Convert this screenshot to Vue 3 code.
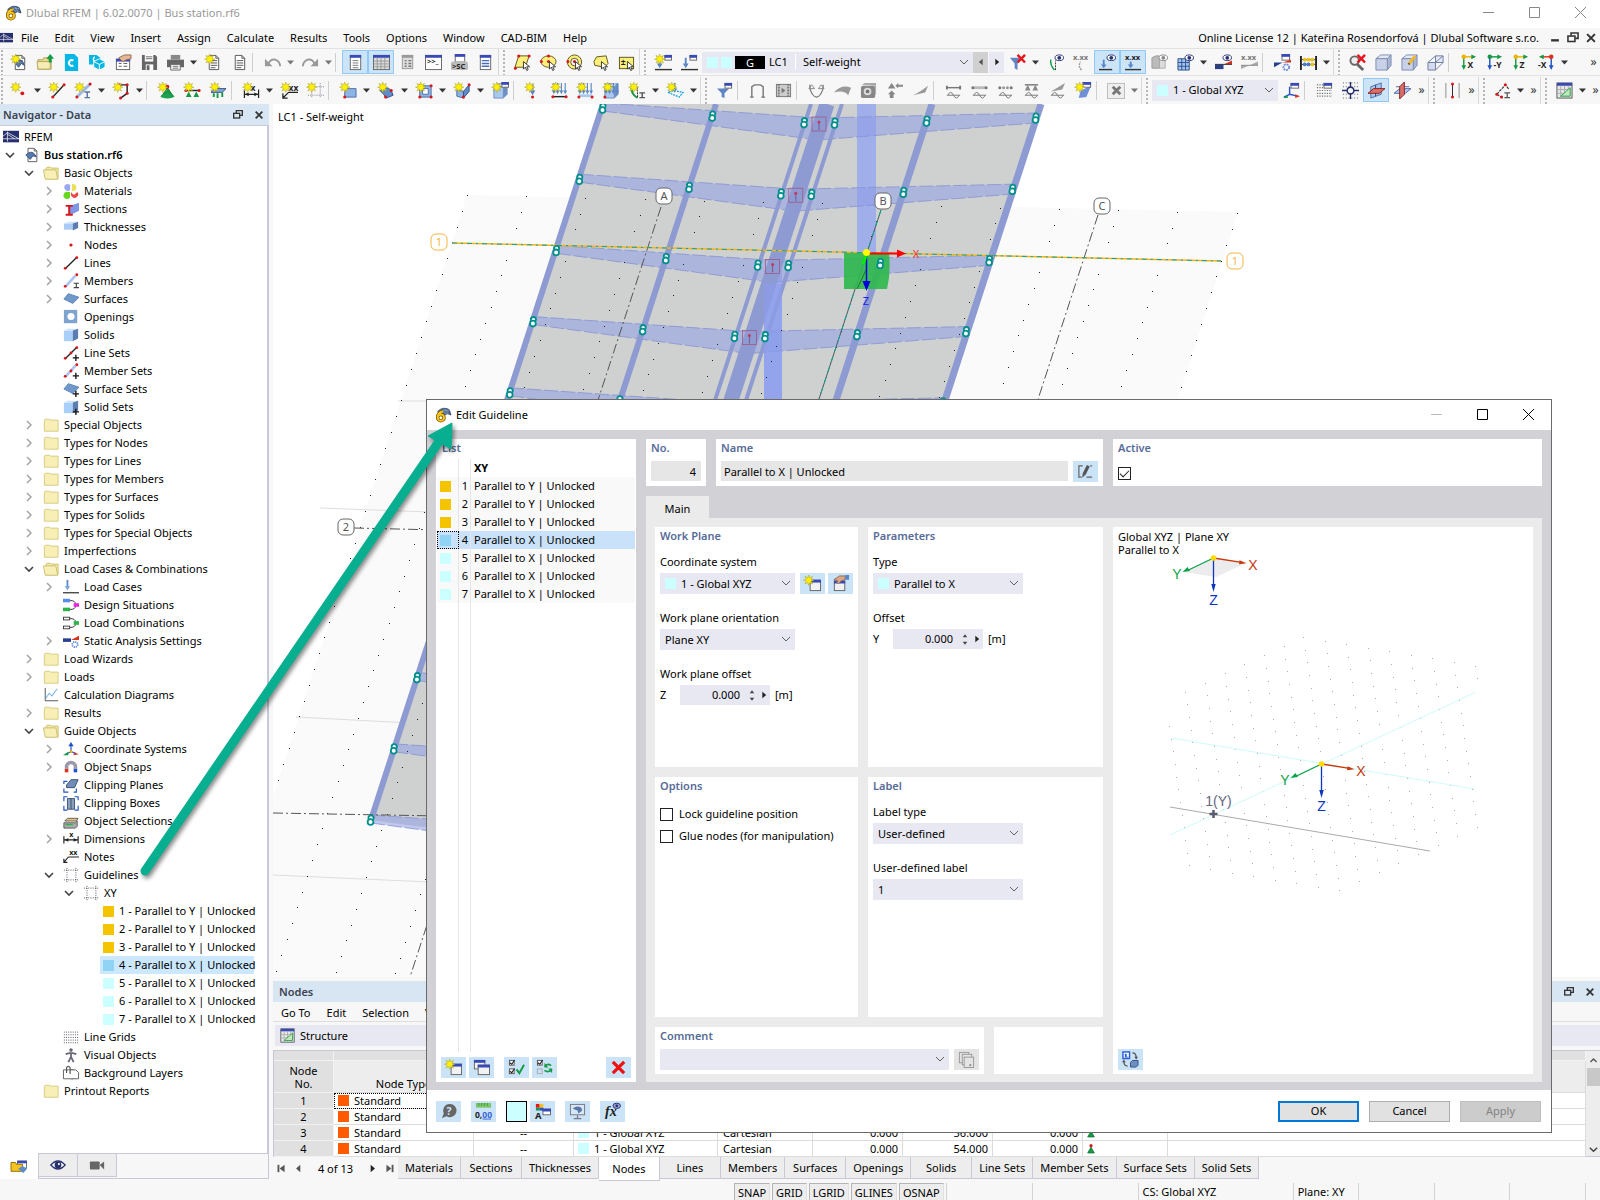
<script setup>
import { ref } from 'vue'

/* ---------- small drawing helpers for the 18 x 18 icons ---------- */
const star = '<path d="M5 0l1 3 3-1.500-1.500 3 3 1-3 1 1.500 3-3-1.500-1 3-1-3-3 1.500 1.500-3-3-1 3-1-1.500-3 3 1.500z" fill="#fff200" stroke="#a8982a" stroke-width=".5"/>'
const line = (d, c = '#222', w = 1.5, x = '') => `<path d="${d}" fill="none" stroke="${c}" stroke-width="${w}" ${x}/>`
const fill = (d, c, s = 'none') => `<path d="${d}" fill="${c}" stroke="${s}"/>`
const dot = (x, y, c = '#d8151b', r = 1.6) => `<circle cx="${x}" cy="${y}" r="${r}" fill="${c}"/>`
const win = (x, y, w, h, b = '#fff') => `<rect x="${x}.5" y="${y}.5" width="${w}" height="${h}" fill="${b}" stroke="#666"/><rect x="${x}" y="${y}" width="${w + 1}" height="3" fill="#3a49b8"/>`
const doc = (c = '#555') => `<path d="M4.500 1.500h7l3 3v12h-10z" fill="#fff" stroke="${c}"/><path d="M11.500 1.500v3h3" fill="none" stroke="${c}"/>`
const lines = (c = '#555') => line('M6 7h7M6 9.500h7M6 12h7M6 14.500h5', c, 1)
const txt = (s, x, y, z = 7, c = '#222') => `<text x="${x}" y="${y}" font-size="${z}" font-weight="700" fill="${c}">${s}</text>`
const cube = (a = '#a9c9f2', b = '#cfe2fa', c = '#6f8fc0') => fill('M2 5l4-3h10l-4 3z', b, c) + fill('M12 5l4-3v11l-4 4z', c, c) + fill('M2 5h10v12H2z', a, c)
const eye = '<ellipse cx="13" cy="4" rx="4.500" ry="3" fill="#fff" stroke="#27306e"/><circle cx="13" cy="4" r="2" fill="#27306e"/>'
const wave = (c = '#777') => line('M2 14h14M3 14q3-6 6 0t6 0', c, 1)
const cursor = fill('M10 8v8l2-2 1.500 3.500 1.500-1-1.500-3h3z', '#fff', '#333')
const axes = (l, c1, c2, flip) => line(flip ? 'M14 3H5' : 'M4 3h9', c2, 1.5) + fill(flip ? 'M1 3l5-2.500v5z' : 'M17 3l-5-2.500v5z', '#149a45') + line(flip ? 'M14 3v10' : 'M4 3v10', c1, 1.5) + fill(flip ? 'M14 17l-2.500-5h5z' : 'M4 17l-2.500-5h5z', c1) + dot(flip ? 14 : 4, 3, c2, 2.4) + txt(l, flip ? 0 : 8, 15, 9)
const bolt = line('M3 1v9M7 1v9M11 1v9M15 1v9', '#5a86c8', 1.2) + fill('M1 9h4l-2 4zM5 9h4l-2 4zM9 9h4l-2 4zM13 9h4l-2 4z', '#5a86c8')

const icons = {
  app: fill('M3 5q6-6 13-2l2 6q-4-3-7 0l-3 1z', '#4c6a92', '#33486a') + line('M7 3l6 5M11 2l4 6M5 6q5-4 11-2', '#9eb4d2', .7) + '<path d="M9 5Q3 6 3 12a3.600 3.600 0 1 0 7.200 0a3.600 3.600 0 1 0-7.200 0" fill="none" stroke="#7a5900" stroke-width="3.800"/><path d="M9 5Q3 6 3 12a3.600 3.600 0 1 0 7.200 0a3.600 3.600 0 1 0-7.200 0" fill="none" stroke="#f5c320" stroke-width="2.200"/>',
  bridge: '<rect x="0" y="2" width="18" height="13" fill="#27306e"/>' + line('M0 11h18M5 3v11M5 4l13 7M5 4L0 8M5 6l8 5', '#fff', .8),
  newfile: doc() + fill('M4 9q3-4 8-2l2 5-3-2-3 4z', '#5878a8', '#3a5582') + star,
  open: fill('M1 6h5l1-2h5v2h3v10H1z', '#e8dc92', '#b3a55a') + fill('M0 8h14v8H1z', '#f5edb4', '#b3a55a') + fill('M14 0l4 5h-2.500v4h-3V5H10z', '#149a45'),
  cloudc: fill('M2 0h10l4 4v14H2z', '#06b7e6') + line('M11 7a3 3 0 1 0 0 5', '#fff', 2.2),
  cubes: fill('M0 1h8l4 3v7H0z', '#06b7e6') + fill('M11 5l6 3v6l-6 3-6-3V8z', '#06b7e6', '#fff') + line('M5 8l6 3 6-3M11 11v6', '#fff', 1) + line('M6 3a3 3 0 0 0 0 5', '#fff', 1.5),
  props: win(1, 5, 14, 11) + line('M4 10h3M9 10h4M4 13h3M9 13h4', '#555', 1) + fill('M4 4l6-3h7v4l-5 1-3 2-2-1z', '#e5b795', '#946b4f'),
  save: fill('M1 1h14l2 2v14H1z', '#666') + fill('M4 1h9v7H4z', '#fff') + line('M5 3h7M5 5h7', '#666', 1) + fill('M5 11h8v6H5z', '#fff') + fill('M6 12h3v5H6z', '#666'),
  print: fill('M0 6h18v8H0z', '#666') + fill('M4 1h10v5H4z', '#888') + fill('M4 11h10v6H4z', '#fff', '#666') + line('M6 13h6M6 15h6', '#666', 1),
  newrep: doc() + lines() + star,
  report: doc() + lines(),
  undo: line('M5 10Q7 5 12 6q5 2 5 7', '#999', 2) + fill('M1 5v8h8z', '#999'),
  redo: line('M13 10Q11 5 6 6q-5 2-5 7', '#999', 2) + fill('M17 5v8H9z', '#999'),
  panel: '<rect x="3.500" y="1.500" width="11" height="15" fill="#fff" stroke="#666"/><rect x="3" y="1" width="12" height="3" fill="#3a49b8"/>' + line('M6 7h6M6 9.500h6M6 12h6M6 14.500h6', '#777', 1),
  table: '<rect x=".5" y="1.500" width="17" height="15" fill="#ddd" stroke="#666"/><rect x="0" y="1" width="18" height="3" fill="#3a49b8"/>' + line('M1 7.500h16M1 10.500h16M1 13.500h16M4.500 4v12M8.500 4v12M12.500 4v12', '#999', 1),
  panelg: '<rect x="3.500" y="1.500" width="11" height="14" fill="#ddd" stroke="#999"/><rect x="3" y="1" width="12" height="3" fill="#999"/>' + line('M6 7h2M10 7h3M6 10h2M10 10h3M6 13h2M10 13h3', '#777', 1.5),
  console: win(0, 1, 17, 15) + txt('&gt;&gt;_', 2, 11, 8),
  script: win(4, 0, 10, 8) + '<rect x="0" y="8" width="18" height="9" rx="2" fill="#bbb"/>' + txt('&gt;SC', 1, 15.500, 8),
  list: '<rect x="3.500" y="1.500" width="11" height="15" fill="#fff" stroke="#666"/><rect x="3" y="1" width="12" height="3" fill="#3a49b8"/>' + line('M5 7h8M5 10h8M5 13h8', '#4a6cc0', 1.5),
  selrect: fill('M5 2h11l-4 12H1z', '#fdf07a', '#5b5320') + dot(5, 2) + dot(16, 2) + dot(1.500, 15) + cursor,
  selell: '<ellipse cx="9" cy="8" rx="8" ry="6" fill="#fdf07a" stroke="#5b5320"/>' + dot(9, 8) + dot(9, 2) + dot(1.500, 8) + cursor,
  selring: '<circle cx="9" cy="8.500" r="7.500" fill="#fdf07a" stroke="#5b5320"/><circle cx="9" cy="8.500" r="4" fill="#f7f7f7" stroke="#5b5320"/>' + dot(9, 8) + dot(2, 8) + cursor,
  sellasso: fill('M2 8L5 3l10-1 2 8-4 4-10-2z', '#fdf07a', '#5b5320') + cursor,
  selpm: '<rect x="1.500" y="3.500" width="15" height="12" fill="#fdf07a" stroke="#5b5320"/>' + txt('±', 3, 12, 9) + cursor,
  lcnew: win(10, 1, 7, 5) + line('M5 4v8', '#5a86c8', 2) + fill('M2 10h6l-3 5z', '#5a86c8') + line('M0 16.500h18', '#333', 1.5) + star,
  lc: win(9, 1, 7, 5) + line('M5 4v8', '#5a86c8', 2) + fill('M2 10h6l-3 5z', '#5a86c8') + line('M0 16.500h18', '#333', 1.5),
  filterx: fill('M1 4h13l-5 6v7l-3-2v-5z', '#5e86c6') + line('M9 1l8 8M17 1l-8 8', '#e8141c', 2.6),
  eyearc: eye + line('M8 17Q3 12 4 6', '#149a45', 1.5) + line('M9 17V7', '#333', 1, 'stroke-dasharray="2 1"'),
  xarc: txt('x.xx', 0, 6, 8, '#777') + line('M9 17Q5 13 8 8', '#999', 1.5, 'stroke-dasharray="2 1"'),
  eyeload: eye + line('M5 6v6', '#5a86c8', 2) + fill('M2 11h6l-3 4z', '#5a86c8') + line('M0 16.500h14', '#333', 1.5),
  xload: txt('x.xx', 0, 6, 8) + line('M6 8v4', '#5a86c8', 2) + fill('M3 11h6l-3 4z', '#5a86c8') + line('M0 16.500h17', '#333', 1.5),
  eyebox: fill('M1 4l4-2h4v13H1z', '#bbb', '#999') + fill('M9 4h6v11H9z', '#ddd', '#aaa') + '<ellipse cx="13" cy="4" rx="4.500" ry="3" fill="#fff" stroke="#888"/><circle cx="13" cy="4" r="2" fill="#888"/>',
  eyegrid: fill('M1 5h12v12H1z', '#9fc2ef', '#33508a') + line('M5 5v12M9 5v12M1 9h12M1 13h12', '#33508a', 1) + eye,
  eyewave: fill('M0 11h9v5H0z', '#27408e') + fill('M9 11l9-4v4z', '#d8321e') + line('M0 11h18', '#333', 1) + eye,
  xwave: txt('x.xx', 0, 6, 8, '#777') + fill('M0 12h9l-9 4z', '#aaa') + fill('M9 12l9-4v4z', '#aaa') + line('M0 12h18', '#888', 1),
  setwave: win(8, 0, 8, 6) + fill('M0 9h9l-9 5z', '#27408e') + fill('M9 9l9-3v3z', '#d8321e') + '<circle cx="13" cy="14" r="3" fill="none" stroke="#6e8fd8" stroke-width="2" stroke-dasharray="2 .8"/>',
  abacus: line('M1 2v15M17 2v15', '#222', 2) + line('M1 6h16M1 11h16', '#333', 1) + dot(5, 6, '#e8c020', 2) + dot(9, 6, '#e8c020', 2) + dot(13, 6, '#e8c020', 2) + dot(5, 11, '#4c78c8', 2) + dot(9, 11, '#4c78c8', 2) + dot(13, 11, '#e8c020', 2),
  magx: '<circle cx="6" cy="7" r="4.500" fill="#eee" stroke="#666" stroke-width="2"/>' + line('M9 11l6 6', '#666', 3) + line('M9 1l8 8M17 1l-8 8', '#e8141c', 2.6),
  box: fill('M1 5l5-4h11l-4 4z', '#e2e8f5', '#7c8bb2') + fill('M13 5l4-4v11l-4 5z', '#a9b5d3', '#7c8bb2') + fill('M1 5h12v12H1z', '#c8d1e8', '#7c8bb2'),
  boxwire: fill('M1 9h8v8H1z', '#d4dbee', '#6b7aa0') + fill('M9 2h8v7H9z', '#e6eaf5', '#6b7aa0') + line('M1 9l8-7M9 9l8-7M9 17l8-8', '#6b7aa0', 1),
  ax1: axes('X', '#149a45', '#e8b400'), ax2: axes('-Y', '#2053c8', '#149a45'), ax3: axes('Z', '#149a45', '#e8b400'), ax4: axes('-X', '#2053c8', '#d8321e', 1),
  node: star + dot(12, 12, '#d8151b', 2), nline: line('M4 16L16 3') + dot(4, 16) + dot(16, 3) + star,
  member: line('M2 16L16 2', '#9db8e2', 3) + dot(2, 16) + dot(16, 2) + line('M10 10.500h6M10 16.500h6M13 10.500v6', '#5a73a8', 1.5) + star,
  poly: line('M7 3h8v9l-7 5', '#222', 1.5) + dot(7, 3) + dot(15, 3) + dot(15, 12) + dot(8, 17) + star,
  support: fill('M10 6l6 9H4z', '#149a45', '#0c6b2e') + '<ellipse cx="10" cy="15" rx="7" ry="2.500" fill="#1aa34f"/>' + dot(10, 5, '#d8151b', 2) + star,
  linesup: line('M1 9h16') + dot(2, 9) + dot(16, 9) + fill('M5 10l3 6H2zM13 10l3 6h-6z', '#149a45') + star,
  surfsup: fill('M5 7h12l-4 4H1z', '#7fa6d8', '#33508a') + line('M4 12v4M8 12v5M13 11v5', '#149a45', 2) + star,
  dim: line('M1.500 8v9M16.500 8v9M2 13h14', '#222', 1.3) + fill('M2 13l4-2v4zM16 13l-4-2v4z', '#222') + txt('x', 8, 10, 9) + star,
  note: line('M8 11h10M8 11l-6 6M2 12v5h5', '#222', 1.3) + txt('xx', 8, 9, 9) + star,
  guide: line('M5 1v16M14 1v16M1 5h17M1 14h17', '#889', 1, 'stroke-dasharray="1 1"') + star,
  surf: fill('M5 7h12v9H5z', '#8db4e8', '#4c6ca0') + dot(5, 16) + star, surf2: fill('M2 9q7-6 12 0l2 5-7 3-3-4z', '#5f8cc6', '#33508a') + dot(14, 9) + dot(8, 16) + star,
  opening: fill('M4 4h12v12H4z', '#8db4e8', '#4c6ca0') + fill('M7 7h6v6H7z', '#fff', '#4c6ca0') + dot(4, 4) + dot(16, 4) + dot(4, 16) + dot(16, 16) + star,
  surf3: fill('M3 8l7 2v7l-7-2z', '#8db4e8', '#4c6ca0') + fill('M10 10l6-7v7l-6 7z', '#5f8cc6', '#33508a') + dot(10, 16) + dot(16, 3) + star,
  solid: cube() + win(10, 0, 7, 5) + star,
  nload: line('M8 2v9', '#5a86c8', 2) + fill('M5 9h6l-3 5z', '#5a86c8') + dot(8, 16) + star,
  mload: bolt + line('M1 15.500h16', '#222', 1.5) + dot(2, 15.500) + dot(16, 15.500) + star, sload: bolt + fill('M2 13h14v3H2z', '#a9c9f2') + dot(2, 16) + dot(16, 16) + star,
  vload: cube() + bolt + dot(2, 16) + star, arc: line('M9 17Q1 12 3 4', '#149a45', 2) + line('M9 16V4', '#222', 1, 'stroke-dasharray="2 1"') + line('M11 11.500h6M11 16.500h6M14 11.500v5', '#555', 1.5) + star,
  fload: line('M8 1v7', '#5a86c8', 2) + fill('M5 7h6l-3 4z', '#5a86c8') + line('M1 11l12 5 4-5-10-2z', '#06a0e6', 1.3, 'stroke-dasharray="2 1"') + star,
  filter: fill('M1 7h13l-5 5v5l-3-1v-4z', '#5e86c6') + win(9, 1, 7, 5), portal: line('M3 16V5l3-2h6l3 2v11M1 16h4M13 16h4', '#777', 1.5), film: '<rect x="1.500" y="2.500" width="15" height="13" fill="#ccc" stroke="#777"/>' + line('M4 2v14M14 2v14', '#777', 2, 'stroke-dasharray="2 1"') + fill('M7 6l4 3-4 3z', '#777'),
  parab: line('M2 3v4q3 9 7 9t7-9V3', '#777', 1.3) + line('M1 7l3-4 3 4M11 7l3-4 3 4M1 7h6M11 7h6', '#888', 1), shell: fill('M0 11Q8 2 18 6l-3 8q-4-6-15-3z', '#999'), cast: '<rect x="1" y="4" width="15" height="13" rx="2" fill="#888"/><circle cx="8" cy="10" r="4" fill="#ddd"/><circle cx="8" cy="10" r="2" fill="#777"/>' + fill('M2 3l3-2h12v12l-1 1V4z', '#aaa'),
  react: fill('M6 1l4 6H2zM6 9l4 4H8v4H4v-4H2z', '#888') + fill('M10 4l3-3v2h5v2h-5v2z', '#888'), wedge: fill('M1 14Q8 11 17 4l-3 7z', '#999'),
  r1: line('M2 6h14', '#777', 1.5) + fill('M1 4h2v4H1zM15 4h2v4h-2z', '#777') + wave(), r2: line('M2 6h14', '#bbb', 3) + dot(2, 6, '#777') + dot(16, 6, '#777') + wave(), r3: dot(3, 6, '#777') + dot(7, 6, '#999') + dot(11, 6, '#999') + dot(15, 6, '#777') + wave(),
  r4: line('M2 3h14', '#777', 1.5) + fill('M5 3l3 6H2zM13 3l3 6h-6z', '#888') + wave(), r5: fill('M2 10Q9 6 17 1l-3 7z', '#999') + wave(),
  clipw: fill('M6 9l11-5-5 12-8 1z', '#6f8fd8') + win(8, 0, 8, 5) + star, xbox: '<rect x="-.500" y="1.500" width="18" height="16" fill="#eee" stroke="#bbb"/>' + line('M5 5l8 8M13 5l-8 8', '#777', 3),
  csys: win(8, 1, 8, 5) + line('M7 5v8l8 2M7 13l-6 3', '#2053c8', 1.5) + fill('M18 15l-5-2v4z', '#d8321e') + fill('M0 17l5-3v3z', '#149a45'), gridw: line('M1 3h9M1 6h8M1 9h16M1 12h16M1 15h16', '#777', 1.3, 'stroke-dasharray="1.300 1.300"') + win(8, 1, 8, 5),
  gridc: line('M1 1h16M1 5h16M1 13h16M1 17h16', '#555', 1, 'stroke-dasharray="1 2"') + line('M9 0v18M0 9h18', '#27306e', 1.5) + '<circle cx="9" cy="9" r="3.500" fill="#f7f7f7" stroke="#27306e" stroke-width="1.500"/>',
  plane1: fill('M3 5l11-4v12L3 17z', '#a9c9f2', '#4c6ca0') + line('M8 3v12', '#33508a', 1.2) + fill('M0 12l6-5h12l-6 5z', '#d9706a', '#8e1c1c'), plane2: fill('M0 12l6-5h12l-6 5z', '#a9c9f2', '#4c6ca0') + line('M2 5h14', '#4c6ca0', 1) + fill('M6 5l5-5v13l-5 5z', '#d9706a', '#8e1c1c'),
  rails: line('M2 1v16M16 1v16', '#888', 1) + line('M9 2v13', '#222', 1) + dot(9, 2) + dot(9, 16), angle: line('M3 13L12 3l4 5M3 13l6 4', '#333', 1.2, 'stroke-dasharray="3 1"') + dot(3, 13) + dot(12, 3) + dot(8, 16) + line('M11 11.500h6M11 16.500h6M14 11.500v5', '#555', 1.3),
  sheet: '<rect x="1" y="1" width="16" height="16" fill="#e8e8e8" stroke="#555"/><rect x="1" y="1" width="16" height="3" fill="#3a49b8"/>' + line('M1 8h16M1 12h16M5 4v13M9 4v13M13 4v13', '#aaa', 1) + fill('M15 6v9H5z', '#bfe8bf', '#2ba048'),

  /* navigator */
  file: doc() + fill('M2 9q5-5 9-2l3 4-4-1-3 4z', '#5878a8', '#3a5582'), dir: '<path d="M1.500 3.500l1-1h5l1 1h8.500v12.500H1.500z" fill="#f7efb6" stroke="#d5c87c"/>', diropen: '<path d="M3.500 15.500v-12l1-1h4l1 1h7.500v12z" fill="#f5eba8" stroke="#c9bb6b"/><path d="M.5 5.500h14l2 10.500H2.500z" fill="#f7efb6" stroke="#c9bb6b"/>',
  mat: '<path d="M5 1a4 4 0 1 0 3 7V2z" fill="#9aa8f0"/><path d="M11 1a4 4 0 0 1 0 8h-1V1z" fill="#ecdf5a"/><path d="M5 10a4 4 0 1 0 3 6V10z" fill="#63d81e"/><path d="M10 10q0 3 3 3l3-3a4 4 0 1 1-6 0z" fill="#e84848"/>',
  sect: fill('M6 6l12-4v9L8 16z', '#7f96e6') + line('M3 5.500h8M3 15.500h8M7 5.500v10', '#d8151b', 2.2), thick: fill('M1 5h10v7H1z', '#a9cbf5') + fill('M1 5l5-2h11l-6 2z', '#cfe2fa') + fill('M11 5l6-2v7l-6 3z', '#5c7eae'),
  tnode: dot(9, 9, '#d8151b', 1.8), tline: line('M3 15L15 3') + dot(2.500, 15) + dot(15.500, 3), tmem: line('M3 15L14 3', '#a9c4f0', 3) + dot(2.500, 15) + dot(15.500, 2) + line('M12 11.500h6M12 16.500h6M15 11.500v5', '#444', 1.3),
  tsurf: fill('M1 9l5-6 12 4-7 7z', '#6f98cc', '#5a80b0'), topen: '<rect x="1" y="1" width="15" height="15" fill="#7fa3cf"/><circle cx="9" cy="8.500" r="4" fill="#fff"/>', tsolid: fill('M1 4h10v12H1z', '#a9d0fb') + fill('M1 4l4-2h12l-6 2z', '#cfe2fa') + fill('M11 4l6-2v11l-6 3z', '#5c7eae'),
  plus: line('M14.500 11v7M11 14.500h7', '#111', 1.5), calc: line('M2.500 1v14.500H17', '#444', 1) + line('M3 13l4-6 3 3 6-8', '#7ab4ee', 1.2),
  tlc: line('M5 1v8', '#5a86c8', 2) + fill('M2 8h6l-3 5z', '#7fa6d8') + line('M0 15.500h18', '#222', 1.3), tds: fill('M0 2h8v4H0z', '#5a8cf0') + fill('M0 12h8v4H0z', '#2bb44a') + line('M8 4q6 0 6 4M8 14q6 0 6-4', '#222', 1) + fill('M12 7h6v4h-6z', '#f020e0'),
  tco: '<rect x=".5" y="2.500" width="7" height="3" fill="#fff" stroke="#333"/><rect x=".5" y="12.500" width="7" height="3" fill="#fff" stroke="#333"/>' + line('M8 4q6 0 6 4M8 14q6 0 6-4', '#222', 1) + fill('M12 7h6v4h-6z', '#2bb44a'), tsa: fill('M0 6h9v4H0z', '#27408e') + fill('M9 8l9-5v5z', '#d8321e') + '<circle cx="13.500" cy="13" r="3" fill="none" stroke="#6e8fd8" stroke-width="2" stroke-dasharray="1.500 .8"/>',
  tcs: line('M9 5v7l6 2M9 12l-6 3', '#2053c8', 1.3) + fill('M9 1l-3 5h6z', '#2053c8') + fill('M18 15l-6-2v3z', '#d8321e') + fill('M0 16l6-4v4z', '#149a45') + dot(9, 12, '#e8b400'), snap: line('M4 11V9a5 5 0 0 1 10 0v2', '#9a9aac', 4) + fill('M2 11h4v4H2z', '#d8321e') + fill('M12 11h4v4h-4z', '#2053c8'),
  clipp: fill('M4 9l5-6h8l-4 9H4z', '#6f8fb8', '#33486a') + line('M1 8V5h4M1 13v4h5M12 17h3v-4', '#2053c8', 1.3), clipb: fill('M5 4h8v12H5z', '#8aa0bc', '#33486a') + line('M9 4v12', '#33486a', 1) + line('M5 2H1v5M1 12v5h4M13 2h4v4M17 12v5h-4', '#2053c8', 1.3),
  objsel: fill('M2 9l3-3h12l-2 3z', '#e8c878', '#555') + fill('M1 11h13l2-2v6l-2 2H1z', '#aaa', '#555') + line('M3 13h8', '#2bb44a', 1.5), tdim: line('M1 6v8M17 6v8M1 10h16', '#222', 1.3) + fill('M2 10l4-2v4zM16 10l-4-2v4z', '#222') + txt('x', 7, 7, 8), tnote: line('M6 9h12M6 9l-5 6M1 11v4h4', '#222', 1.3) + txt('xx', 7, 7, 8),
  tguide: line('M4.500 1v16M14.500 1v16M1 3.500h17M1 14.500h17', '#334', 1, 'stroke-dasharray="1 1.500"'), tgrid: line('M1 3.500h16M1 6.500h16M1 9.500h16M1 12.500h16M1 15.500h16', '#334', 1, 'stroke-dasharray="1 1.500"'),
  man: dot(9, 3.500, '#667', 2) + line('M3 8l4-1h4l4 1M9 7v4l-3 6M9 11l3 6', '#667', 2), layers: '<path d="M.5 5.500h11v10H.5z" fill="#fff" stroke="#555"/><path d="M8.500 5.500h6l3 3v7h-9" fill="#fff" stroke="#555"/>' + line('M4 9V3q2-3 4 0v7', '#555', 1.3),
  navdata: win(7, 3, 10, 8) + fill('M0 5h5l1 2h7v8H0z', '#f5c320', '#8a6500') + fill('M8 12l5-3 5 3-4 5z', '#5f8cc6'), naveye: '<path d="M1 9q8-9 16 0-8 9-16 0z" fill="#fff" stroke="#27306e" stroke-width="1.500"/><circle cx="9" cy="9" r="3.800" fill="#27306e"/><circle cx="10" cy="8" r="1.200" fill="#fff"/>', cam: '<rect x="1" y="5" width="11" height="9" rx="1" fill="#666"/>' + fill('M12 9l5-4v9z', '#666'),

  /* dialog */
  dnew: win(6, 5, 11, 11, '#f2f2f2') + star, dcopy: win(1, 1, 11, 9, '#f2f2f2') + win(5, 6, 12, 10, '#f2f2f2'), hand: win(2, 6, 11, 10, '#f2f2f2') + fill('M2 5l6-4h6v4l-4 1-3 3-2-1 1-2z', '#d9a988', '#8f6a52') + fill('M14 0h4v5h-4z', '#5a86c8'),
  checks: '<rect x="1.500" y="1.500" width="5" height="5" fill="#fff" stroke="#555"/><rect x="1.500" y="10.500" width="5" height="5" fill="#fff" stroke="#555"/>' + line('M2 4l2 1.500L7 1M2 13l2 1.500L7 10', '#222', 1.2) + line('M9 11l3 4 5-9', '#149a45', 2), checkswap: '<rect x="1.500" y="1.500" width="5" height="5" fill="#fff" stroke="#555"/><rect x="1.500" y="10.500" width="5" height="5" fill="none" stroke="#aaa"/>' + line('M2 4l2 1.500L7 1', '#222', 1.2) + line('M9 8q3-4 7-1M17 11q-4 4-8 1', '#149a45', 1.8) + fill('M9 4v5h4zM17 15v-5h-4z', '#149a45'),
  del: line('M3 3l12 12M15 3L3 15', '#ee1111', 3.4), pen: line('M6 3H2v12h3M14 3h2M10 15h6', '#666', 1.3) + line('M7.500 12L12 3', '#555', 3.4) + fill('M6 11l3 1.500-3.500 3z', '#555'), multi: '<rect x="1.500" y="1.500" width="10" height="11" fill="#e4e4e4" stroke="#999"/><rect x="4.500" y="3.500" width="10" height="11" fill="#e4e4e4" stroke="#999"/><rect x="6.500" y="6.500" width="10" height="11" fill="#e4e4e4" stroke="#999"/>' + line('M12 15h2', '#888', 2),
  help: '<path d="M10 1a7 7 0 1 1-3 13l-5 2 2-5a7 7 0 0 1 6-10z" fill="#666"/>' + txt('?', 7, 12.500, 11, '#cce4f7'), units: '<rect x="1" y="0" width="16" height="5" fill="#7bc86c"/>' + line('M4 0v3M7 0v3M10 0v3M13 0v3', '#48933a', 1) + '<text x="0" y="15.500" font-size="9" font-weight="700" fill="#222">0,<tspan fill="#3a63d8">00</tspan></text>' + line('M8 17h9', '#3a63d8', 1),
  disp: fill('M2 1h4v4H2z', '#e8141c') + fill('M6 1h4v4H6z', '#f5c320') + fill('M2 5h4v3H2z', '#149a45') + fill('M6 5h4v3H6z', '#2053c8') + win(9, 6, 8, 6) + txt('A', 1, 17, 10), screen: '<rect x="1.500" y="1.500" width="15" height="11" fill="#d7e6f5" stroke="#778"/>' + fill('M4 6q4-4 9-1l1 3-4 3-1-3z', '#5878a8') + line('M9 13v3M5 16.500h8', '#778', 1.3),
  fx: '<text x="1" y="14" font-size="15" font-style="italic" font-weight="700" font-family="Liberation Serif, serif" fill="#222">fx</text>' + '<ellipse cx="13.500" cy="3" rx="4" ry="2.800" fill="#9ea4d8" stroke="#27306e"/><circle cx="13.500" cy="3" r="1.500" fill="#27306e"/>',
  swap: '<rect x="1" y="1" width="7" height="7" fill="#fff" stroke="#2a5bd8" stroke-width="1.500"/>' + fill('M3 3h2v3h2v1H3z', '#2a5bd8') + line('M11 2q4 0 4 5M6 16q-4 0-4-5', '#555', 1.3) + fill('M13 6h4l-2 3zM0 12h4l-2-3z', '#555') + fill('M9 12l2-2h6v5l-2 2H9z', '#6f8fc0', '#33508a'),
  restore: '<path d="M6.500 6V2.500h9v7H12" fill="none" stroke="#333" stroke-width="2"/><rect x="2.500" y="6.500" width="9" height="7" fill="none" stroke="#333" stroke-width="2"/>', close: line('M4 4l10 10M14 4L4 14', '#333', 2.6), minim: line('M4 12h10', '#333', 3),
  chev: line('M3 6l6 6 6-6', '#555', 1.4), open2: line('M3 6l6 6 6-6', '#444', 2.4), closed: line('M6 3l6 6-6 6', '#a4a4a4', 2.2),
  sup: fill('M9 6l5 9H4z', '#149a45', '#0c6b2e') + dot(9, 4, '#d8151b', 2.4), caret: fill('M2 5h14l-7 8z', '#333'), caretg: fill('M2 5h14l-7 8z', '#777'), left: fill('M12 3v12L5 9z', '#555'), right: fill('M6 3v12l7-6z', '#222'),
  first: line('M4 3v12', '#555', 3) + fill('M14 3v12L6 9z', '#555'), last: line('M14 3v12', '#555', 3) + fill('M4 3v12l8-6z', '#555'), up: line('M4 11.500l5-5 5 5', '#555', 2.2),
}
icons.boxpen = icons.box + line('M8 11l7-9', '#f0b92a', 3) + line('M8 11l1-1', '#444', 2)
icons.lineset = icons.tline + dot(9, 9) + icons.plus
icons.memset = line('M3 15L14 3', '#a9c4f0', 3) + dot(2.5, 15) + dot(9, 9) + dot(15.5, 2) + icons.plus
icons.surfset = icons.tsurf + icons.plus
icons.solset = icons.tsolid + icons.plus

/* toolbar rows: i = button, h = highlighted, d = drop arrow, s = separator, g = group edge */
const parse = s => s.trim().split(/\s+/).map(t => {
  const [k, v] = t.split(':')
  return { k, v }
})
const bar1 = parse(`e i:newfile i:open i:cloudc i:cubes i:props i:save i:print d i:newrep i:report s i:undo d:g i:redo d:g s
 h:panel h:table i:panelg i:console i:script i:list g i:selrect i:selell i:selring i:sellasso i:selpm g i:lcnew i:lc case
 i:filterx d i:eyearc i:xarc h:eyeload h:xload i:eyebox i:eyegrid d i:eyewave i:xwave s i:setwave i:abacus d g
 i:magx i:box i:boxpen i:boxwire s i:ax1 i:ax2 i:ax3 i:ax4 d sp more`)
const bar2 = parse(`e i:node d i:nline i:member d i:poly d s i:support i:linesup i:surfsup s i:dim d i:note i:guide s i:surf d i:surf2 d
 i:opening d i:surf3 d i:solid s i:nload i:mload i:sload i:vload i:arc d i:fload d g i:filter s i:portal i:film s
 i:parab i:shell i:cast i:react i:wedge s i:r1 i:r2 i:r3 i:r4 i:r5 i:clipw s i:xbox d:g g cs i:csys s
 i:gridw i:gridc h:plane1 i:plane2 more g i:rails more g i:angle d more g i:sheet d sp more`)

const menus = ['File', 'Edit', 'View', 'Insert', 'Assign', 'Calculate', 'Results', 'Tools', 'Options', 'Window', 'CAD-BIM', 'Help']

const tree = `0||bridge|RFEM
1|o|file|Bus station.rf6
2|o|diropen|Basic Objects
3|c|mat|Materials
3|c|sect|Sections
3|c|thick|Thicknesses
3|c|tnode|Nodes
3|c|tline|Lines
3|c|tmem|Members
3|c|tsurf|Surfaces
3||topen|Openings
3||tsolid|Solids
3||lineset|Line Sets
3||memset|Member Sets
3||surfset|Surface Sets
3||solset|Solid Sets
2|c|dir|Special Objects
2|c|dir|Types for Nodes
2|c|dir|Types for Lines
2|c|dir|Types for Members
2|c|dir|Types for Surfaces
2|c|dir|Types for Solids
2|c|dir|Types for Special Objects
2|c|dir|Imperfections
2|o|diropen|Load Cases & Combinations
3|c|tlc|Load Cases
3||tds|Design Situations
3||tco|Load Combinations
3|c|tsa|Static Analysis Settings
2|c|dir|Load Wizards
2|c|dir|Loads
2||calc|Calculation Diagrams
2|c|dir|Results
2|o|diropen|Guide Objects
3|c|tcs|Coordinate Systems
3|c|snap|Object Snaps
3||clipp|Clipping Planes
3||clipb|Clipping Boxes
3||objsel|Object Selections
3|c|tdim|Dimensions
3||tnote|Notes
3|o|tguide|Guidelines
4|o|tguide|XY
5||#f5c400|1 - Parallel to Y | Unlocked
5||#f5c400|2 - Parallel to Y | Unlocked
5||#f5c400|3 - Parallel to Y | Unlocked
5||#8fd3f5|4 - Parallel to X | Unlocked
5||#ccffff|5 - Parallel to X | Unlocked
5||#ccffff|6 - Parallel to X | Unlocked
5||#ccffff|7 - Parallel to X | Unlocked
3||tgrid|Line Grids
3||man|Visual Objects
3||layers|Background Layers
2||dir|Printout Reports`.split('\n').map(r => {
  const [lv, ex, icon, ...rest] = r.split('|')
  return { lv: +lv, ex, icon, text: rest.join('|') }
})

const guidelines = [1, 2, 3, 4, 5, 6, 7].map(n => ({
  n, color: n < 4 ? '#f5c400' : n === 4 ? '#8fd3f5' : '#ccffff', text: `Parallel to ${n < 4 ? 'Y' : 'X'} | Unlocked`,
}))

const rows = [[1, '60.000'], [2, '58.000'], [3, '56.000'], [4, '54.000']]
const sheets = ['Materials', 'Sections', 'Thicknesses', 'Nodes', 'Lines', 'Members', 'Surfaces', 'Openings', 'Solids', 'Line Sets', 'Member Sets', 'Surface Sets', 'Solid Sets']

/* model geometry */
const frames = Array.from({ length: 11 }, (_, k) => ({ x: 603 - 23.2 * k, y: 108 + 71.2 * k }))
const joints = [[0, 0], [109.7, 8], [201.500, 14.600], [232, 15], [324, 13], [433, 10]]
const purlins = [[603, 6], [716, 6], [811, 4], [827, 15], [842, 4], [932, 7], [1041, 7]]
let gridDots = ''
for (let j = 0; j < 50; j++) for (let i = 0; i < 14; i++) {
  const x = Math.round(467 + 59.2 * i - 5.1 * j)
  if (x > 273) gridDots += `M${x} ${Math.round(195 + 1.4 * i + 15.8 * j)}.5h1`
}
let previewDots = ''
for (let i = -10; i <= 10; i++) for (let j = -10; j <= 10; j++) {
  const x = 1321.3 + 21.47 * i - 19.67 * j
  if (x >= 1169 && x <= 1477) previewDots += `M${Math.round(x)} ${Math.round(763.7 + 3.57 * i + 9.1 * j)}.5h1`
}

const lock = ref(false)
const glue = ref(false)
const active = ref(true)
</script>

<template>
  <div class="app">
    <header class="titlebar">
      <svg class="ic" viewBox="0 0 18 18" v-html="icons.app" />
      <span class="grow">Dlubal RFEM | 6.02.0070 | Bus station.rf6</span>
      <div class="winbtns">
        <button aria-label="Minimize"><svg viewBox="0 0 11 11"><path d="M0 5.500h11" /></svg></button>
        <button aria-label="Maximize"><svg viewBox="0 0 11 11"><path d="M.5 .5h10v10h-10z" /></svg></button>
        <button aria-label="Close"><svg viewBox="0 0 11 11"><path d="M0 0l11 11M11 0L0 11" /></svg></button>
      </div>
    </header>

    <nav class="menubar">
      <svg class="ic brand" viewBox="0 0 18 18" v-html="icons.bridge" />
      <button v-for="m in menus" :key="m">{{ m }}</button>
      <span class="license">Online License 12 | Kateřina Rosendorfová | Dlubal Software s.r.o.</span>
      <button v-for="b in ['minim', 'restore', 'close']" :key="b" class="mdi" :aria-label="b"><svg viewBox="0 0 18 18" v-html="icons[b]" /></button>
    </nav>

    <div v-for="(bar, bi) in [bar1, bar2]" :key="bi" class="toolbar">
      <template v-for="(t, i) in bar" :key="i">
        <button v-if="t.k === 'i' || t.k === 'h'" class="tb" :class="{ on: t.k === 'h' }" :aria-label="t.v"><svg class="ic" viewBox="0 0 18 18" v-html="icons[t.v]" /></button>
        <button v-else-if="t.k === 'd'" class="drop" aria-label="More options"><svg viewBox="0 0 18 18" v-html="t.v ? icons.caretg : icons.caret" /></button>
        <i v-else-if="t.k === 's'" class="sep" />
        <i v-else-if="t.k === 'g'" class="edge" />
        <i v-else-if="t.k === 'e'" class="edge first" />
        <span v-else-if="t.k === 'sp'" class="grow" />
        <button v-else-if="t.k === 'more'" class="more" aria-label="Show more">»</button>
        <div v-else-if="t.k === 'cs'" class="combo cs">
          <i class="sw" />
          <select aria-label="Coordinate system"><option>1 - Global XYZ</option></select>
          <svg class="chev" viewBox="0 0 18 18" v-html="icons.chev" />
        </div>
        <template v-else>
          <div class="combo case">
            <i class="sw" /><i class="sw" /><b class="tag">G</b><span class="lc">LC1</span>
            <select aria-label="Load case"><option>Self-weight</option></select>
            <svg class="chev" viewBox="0 0 18 18" v-html="icons.chev" />
          </div>
          <button class="step dim" aria-label="Previous"><svg viewBox="0 0 18 18" v-html="icons.left" /></button>
          <button class="step" aria-label="Next"><svg viewBox="0 0 18 18" v-html="icons.right" /></button>
        </template>
      </template>
    </div>

    <div class="work">
      <aside class="navigator">
        <h2 class="panelhead"><span class="grow">Navigator - Data</span>
          <button v-for="b in ['restore', 'close']" :key="b" :aria-label="b"><svg viewBox="0 0 18 18" v-html="icons[b]" /></button>
        </h2>
        <ul class="tree">
          <li v-for="(r, i) in tree" :key="i" :class="['l' + r.lv, { bold: i === 1, sel: r.text.startsWith('4 -') }]">
            <span v-if="r.lv && r.lv < 5" class="exp"><svg v-if="r.ex" viewBox="0 0 18 18" v-html="r.ex === 'o' ? icons.open2 : icons.closed" /></span>
            <i v-if="r.lv === 5" class="sw" :style="{ background: r.icon }" />
            <svg v-else class="tic" viewBox="0 0 18 18" v-html="icons[r.icon]" />
            <span class="tx">{{ r.text }}</span>
          </li>
        </ul>
        <div class="navtabs">
          <button v-for="(b, i) in ['navdata', 'naveye', 'cam']" :key="b" :class="{ cur: i === 0 }" :aria-label="b"><svg class="ic" viewBox="0 0 18 18" v-html="icons[b]" /></button>
        </div>
      </aside>

      <main class="main">
        <section class="view">
          <svg viewBox="273 104 1327 873" preserveAspectRatio="xMinYMin slice">
            <path d="M467 195L1238 212L986 998H208z" fill="#fafafa" />
            <path d="M398 401h28M320 508L430 512M296 717L430 724M273 875L430 882" stroke="#dedede" fill="none" />
            <path d="M602 104H1041L800 838Q580 850 370 820z" fill="#cfd1d0" />
            <path d="M857 104h19v149h-19zM764 270h18v140h-18z" fill="#a0aeea" />
            <g v-for="f in frames" :key="f.y" :transform="`translate(${f.x} ${f.y})`">
              <path d="M0 -5L216 10L432 5V15L215 32L0 3z" fill="#8f9fe6" fill-opacity=".55" />
              <path d="M0 -5L216 10L432 5M0 3L215 32L432 15" fill="none" stroke="#8592d2" stroke-opacity=".8" stroke-dasharray="14 3" />
            </g>
            <path v-for="p in purlins" :key="p[0]" :d="`M${p[0]} 104l-232 716`" :stroke-width="p[1]" stroke="#8e9ad2" fill="none" />
            <path d="M764 284h18v116h-18z" fill="#8b9cec" fill-opacity=".6" />
            <path :d="gridDots" stroke="#222" />
            <g class="dashdot">
              <path d="M661 207L410 977M1098 215L850 977M354 528L440 530M273 813L440 816" />
            </g>
            <path d="M881 210L819 399" stroke="#555" /><path d="M881 210L819 399" stroke="#0aa39a" stroke-dasharray="6 5" />
            <path d="M452 243L1221 261" stroke="#f5b31e" stroke-width="1.500" /><path d="M452 243L1221 261" stroke="#0aa39a" stroke-dasharray="5 4 2 4" />
            <g v-for="f in frames" :key="f.x" :transform="`translate(${f.x} ${f.y})`" fill="none">
              <rect x="209" y="9" width="14" height="14" stroke="#a0507c" stroke-width=".7" />
              <circle cx="216" cy="14" r="1.500" fill="#c8385c" /><path d="M216 15v7" stroke="#7a3a70" stroke-opacity=".7" />
            </g>
            <path d="M844 253h45q2 20-2 36h-43z" fill="#2db84b" fill-opacity=".9" /><path d="M866 270l-9 19" stroke="#1b6f35" />
            <g v-for="f in frames" :key="f.y" :transform="`translate(${f.x} ${f.y})`" fill="#fff" stroke="#008f8a" stroke-width="1.800">
              <g v-for="j in joints" :key="j[0]" :transform="`translate(${j[0]} ${j[1]})`"><circle cx="0" cy="-2" r="2.600" /><circle cx="-.5" cy="2" r="2.900" /></g>
            </g>
            <path d="M867 253.500h32" stroke="#f00" stroke-width="2" /><path d="M906 253.500l-9-4v8z" fill="#f00" />
            <path d="M866.500 256v26" stroke="#00d" stroke-width="1.500" /><path d="M866.500 291l-4-10h8z" fill="#00d" />
            <path d="M866 256l-3 8" stroke="#0e0" stroke-width="3" /><circle cx="866.500" cy="252.500" r="3.500" fill="#ff0" />
            <g class="marks">
              <text x="916" y="258" fill="#e33">X</text><text x="866" y="305" fill="#22e">Z</text>
              <g v-for="m in [['A', 664, 196], ['B', 883, 201], ['C', 1102, 206], ['2', 346, 527]]" :key="m[0]">
                <rect :x="m[1] - 8" :y="m[2] - 8" width="16" height="16" rx="5" fill="#fff" stroke="#666" /><text :x="m[1]" :y="m[2] + 4" fill="#555">{{ m[0] }}</text>
              </g>
              <g v-for="m in [[439, 242], [1235, 261]]" :key="m[0]">
                <rect :x="m[0] - 8" :y="m[1] - 8" width="16" height="16" rx="5" fill="#fff" stroke="#f5b440" /><text :x="m[0]" :y="m[1] + 4" fill="#f5b440">1</text>
              </g>
            </g>
          </svg>
          <p class="caption">LC1 - Self-weight</p>
        </section>

        <section class="nodes">
          <h2 class="panelhead"><span class="grow">Nodes</span>
            <button v-for="b in ['restore', 'close']" :key="b" :aria-label="b"><svg viewBox="0 0 18 18" v-html="icons[b]" /></button>
          </h2>
          <div class="submenu"><button>Go To</button><button>Edit</button><button>Selection</button><button>View</button></div>
          <div class="combo structure"><svg class="ic" viewBox="0 0 18 18" v-html="icons.sheet" /><select aria-label="Table group"><option>Structure</option></select></div>
          <div class="tablewrap">
            <table>
              <colgroup><col style="width:60px"><col style="width:140px"><col style="width:100px"><col style="width:144px"><col style="width:95px"><col style="width:90px"><col style="width:90px"><col style="width:90px"><col style="width:85px"><col></colgroup>
              <thead>
                <tr class="thin"><th v-for="n in 10" :key="n" /></tr>
                <tr class="heads"><th class="no">Node<br>No.</th><th>Node Type</th><th v-for="n in 8" :key="n" /></tr>
              </thead>
              <tbody>
                <tr v-for="r in rows" :key="r[0]">
                  <th class="no">{{ r[0] }}</th>
                  <td :class="{ focus: r[0] === 1 }"><span class="cell"><i class="sw std" />Standard</span></td>
                  <td class="mid">--</td>
                  <td><span class="cell"><i class="sw" />1 - Global XYZ</span></td>
                  <td class="pad">Cartesian</td>
                  <td class="num">0.000</td><td class="num">{{ r[1] }}</td><td class="num">0.000</td>
                  <td><svg class="supic" viewBox="0 0 18 18" v-html="icons.sup" /></td><td />
                </tr>
              </tbody>
            </table>
            <div class="scroll"><svg viewBox="0 0 18 18" v-html="icons.up" /><i /><svg viewBox="0 0 18 18" v-html="icons.open2" /></div>
          </div>
          <div class="sheets">
            <div class="pager">
              <button aria-label="First"><svg viewBox="0 0 18 18" v-html="icons.first" /></button>
              <button aria-label="Previous"><svg viewBox="0 0 18 18" v-html="icons.left" /></button>
              <span class="grow">4 of 13</span>
              <button aria-label="Next"><svg viewBox="0 0 18 18" v-html="icons.right" /></button>
              <button aria-label="Last"><svg viewBox="0 0 18 18" v-html="icons.last" /></button>
            </div>
            <button v-for="s in sheets" :key="s" class="sheet" :class="{ cur: s === 'Nodes' }">{{ s }}</button>
          </div>
        </section>
      </main>
    </div>

    <footer class="status">
      <button v-for="s in ['SNAP', 'GRID', 'LGRID', 'GLINES', 'OSNAP']" :key="s">{{ s }}</button>
      <span class="c1" /><span class="c2" /><span class="c3">CS: Global XYZ</span><span class="c4">Plane: XY</span><span class="c5" /><span class="c5" /><span class="c5" /><span class="c6" />
    </footer>

    <section class="dialog" role="dialog" aria-label="Edit Guideline">
      <header class="dtitle">
        <svg class="ic" viewBox="0 0 18 18" v-html="icons.app" /><span class="grow">Edit Guideline</span>
        <div class="winbtns dark">
          <button aria-label="Minimize" class="off"><svg viewBox="0 0 11 11"><path d="M0 5.500h11" /></svg></button>
          <button aria-label="Maximize"><svg viewBox="0 0 11 11"><path d="M.5 .5h10v10h-10z" /></svg></button>
          <button aria-label="Close"><svg viewBox="0 0 11 11"><path d="M0 0l11 11M11 0L0 11" /></svg></button>
        </div>
      </header>

      <div class="dbody">
        <div class="card listcard">
          <h3>List</h3>
          <div class="list">
            <div class="lrow head"><span class="a" /><span class="b" /><b class="c">XY</b></div>
            <div v-for="g in guidelines" :key="g.n" class="lrow" :class="{ sel: g.n === 4 }">
              <span class="a"><i class="sw" :style="{ background: g.color }" /></span><span class="b">{{ g.n }}</span><span class="c">{{ g.text }}</span>
            </div>
            <div class="lrow rest"><span class="a" /><span class="b" /><span class="c" /></div>
          </div>
          <div class="btns">
            <button v-for="b in ['dnew', 'dcopy']" :key="b" class="bb" :aria-label="b"><svg class="ic" viewBox="0 0 18 18" v-html="icons[b]" /></button>
            <i class="gap" />
            <button v-for="b in ['checks', 'checkswap']" :key="b" class="bb" :aria-label="b"><svg class="ic" viewBox="0 0 18 18" v-html="icons[b]" /></button>
            <span class="grow" />
            <button class="bb" aria-label="Delete"><svg class="ic" viewBox="0 0 18 18" v-html="icons.del" /></button>
          </div>
        </div>

        <div class="right">
          <div class="toprow">
            <div class="card no"><h3><label for="no">No.</label></h3><input id="no" class="ro" value="4" readonly></div>
            <div class="card name"><h3><label for="nm">Name</label></h3>
              <div class="line"><input id="nm" class="ro" value="Parallel to X | Unlocked" readonly><button class="bb" aria-label="Edit name"><svg class="ic" viewBox="0 0 18 18" v-html="icons.pen" /></button></div>
            </div>
            <div class="card act"><h3><label for="ac">Active</label></h3><input id="ac" v-model="active" type="checkbox"></div>
          </div>
          <div class="tabs"><button>Main</button></div>
          <div class="page">
            <div class="left">
              <div class="card wp">
                <h3>Work Plane</h3>
                <div class="field"><label for="f1">Coordinate system</label>
                  <div class="line"><div class="combo w135"><i class="sw" /><select id="f1"><option>1 - Global XYZ</option></select><svg class="chev" viewBox="0 0 18 18" v-html="icons.chev" /></div>
                    <button class="bb" aria-label="New"><svg class="ic" viewBox="0 0 18 18" v-html="icons.dnew" /></button><button class="bb" aria-label="Edit"><svg class="ic" viewBox="0 0 18 18" v-html="icons.hand" /></button></div>
                </div>
                <div class="field"><label for="f2">Work plane orientation</label>
                  <div class="combo w135"><select id="f2"><option>Plane XY</option></select><svg class="chev" viewBox="0 0 18 18" v-html="icons.chev" /></div>
                </div>
                <div class="field"><label for="f3">Work plane offset</label>
                  <div class="line offs"><span class="ax">Z</span><div class="spin"><input id="f3" value="0.000"><svg class="ud" viewBox="0 0 8 14"><path d="M4 0l3 4H1zM4 14l3-4H1z" fill="#444" /></svg><svg class="pl" viewBox="0 0 18 18" v-html="icons.right" /></div><span>[m]</span></div>
                </div>
              </div>
              <div class="card pa">
                <h3>Parameters</h3>
                <div class="field"><label for="f4">Type</label>
                  <div class="combo w150"><i class="sw" /><select id="f4"><option>Parallel to X</option></select><svg class="chev" viewBox="0 0 18 18" v-html="icons.chev" /></div>
                </div>
                <div class="field"><label for="f5">Offset</label>
                  <div class="line offs"><span class="ax">Y</span><div class="spin"><input id="f5" value="0.000"><svg class="ud" viewBox="0 0 8 14"><path d="M4 0l3 4H1zM4 14l3-4H1z" fill="#444" /></svg><svg class="pl" viewBox="0 0 18 18" v-html="icons.right" /></div><span>[m]</span></div>
                </div>
              </div>
              <div class="card wp">
                <h3>Options</h3>
                <label class="check"><input v-model="lock" type="checkbox">Lock guideline position</label>
                <label class="check"><input v-model="glue" type="checkbox">Glue nodes (for manipulation)</label>
              </div>
              <div class="card pa">
                <h3>Label</h3>
                <div class="field"><label for="f6">Label type</label>
                  <div class="combo w150"><select id="f6"><option>User-defined</option></select><svg class="chev" viewBox="0 0 18 18" v-html="icons.chev" /></div>
                </div>
                <div class="field"><label for="f7">User-defined label</label>
                  <div class="combo w150"><select id="f7"><option>1</option></select><svg class="chev" viewBox="0 0 18 18" v-html="icons.chev" /></div>
                </div>
              </div>
              <div class="card co">
                <h3><label for="f8">Comment</label></h3>
                <div class="line"><div class="combo grow"><select id="f8"><option /></select><svg class="chev" viewBox="0 0 18 18" v-html="icons.chev" /></div>
                  <button class="bb gray" aria-label="Comments"><svg class="ic" viewBox="0 0 18 18" v-html="icons.multi" /></button></div>
              </div>
              <div class="card em" />
            </div>
            <div class="card preview">
              <p>Global XYZ | Plane XY<br>Parallel to X</p>
              <svg class="scene" viewBox="1118 557 410 487" preserveAspectRatio="xMinYMin meet">
                <path d="M1213.500 558L1246 563L1216 577L1183 572z" fill="#ececee" />
                <path :d="previewDots" stroke="#aaa" />
                <path d="M1171 738L1475 789M1170 835L1476 692" stroke="#cffafa" fill="none" />
                <path d="M1170 807L1430 851" stroke="#aaa" />
                <path d="M1209.500 814h8M1213.500 810v8" stroke="#5a5a70" stroke-width="2.500" />
                <g v-for="o in [[1213.500, 558], [1321.500, 764]]" :key="o[0]" :transform="`translate(${o[0]} ${o[1]})`">
                  <path d="M0 0L28 4.300" stroke="#c9370b" stroke-width="1.300" /><path d="M33 5.200l-7.500 1 .5-4z" fill="#c9370b" />
                  <path d="M0 0L-25 12" stroke="#0aa24a" stroke-width="1.300" /><path d="M-31 14l5-5 2.500 4z" fill="#0aa24a" />
                  <path d="M0 0V28" stroke="#0a36c0" stroke-width="1.300" /><path d="M0 34l-2.200-8h4.400z" fill="#0a36c0" />
                  <circle r="2.800" fill="#ffdc00" />
                  <text x="39.500" y="11.500" fill="#c9370b">X</text><text x="-36.500" y="20.500" fill="#0aa24a">Y</text><text x="0" y="47" fill="#0a36c0">Z</text>
                </g>
                <text x="1218.500" y="806" fill="#66667a">1(Y)</text>
              </svg>
              <button class="bb" aria-label="Switch view"><svg class="ic" viewBox="0 0 18 18" v-html="icons.swap" /></button>
            </div>
          </div>
        </div>
      </div>

      <footer class="dfoot">
        <button class="bb" aria-label="Help"><svg class="ic" viewBox="0 0 18 18" v-html="icons.help" /></button>
        <button class="bb" aria-label="Units"><svg class="ic" viewBox="0 0 18 18" v-html="icons.units" /></button>
        <div class="line"><button class="colour" aria-label="Colour" /><button class="bb" aria-label="Display"><svg class="ic" viewBox="0 0 18 18" v-html="icons.disp" /></button></div>
        <button class="bb" aria-label="Screen"><svg class="ic" viewBox="0 0 18 18" v-html="icons.screen" /></button>
        <button class="bb" aria-label="Formula"><svg class="ic" viewBox="0 0 18 18" v-html="icons.fx" /></button>
        <span class="grow" />
        <button class="push ok">OK</button><button class="push">Cancel</button><button class="push" disabled>Apply</button>
      </footer>
    </section>

    <svg class="pointer" viewBox="0 0 480 900" width="480" height="900">
      <path d="M145 871L440 440" stroke="#07ae90" stroke-width="9" stroke-linecap="round" />
      <path d="M452 423L428 436L451 449z" fill="#07ae90" stroke="#07ae90" stroke-linejoin="round" />
    </svg>
  </div>
</template>

<style>
body { margin: 0; background: #f7f7f7; overflow: hidden; }
</style>

<style scoped>
.app { position: relative; display: flex; flex-direction: column; height: 100vh; overflow: hidden; background: #f7f7f7; color: #000; font: 11px/16px "Noto Sans", "Open Sans", sans-serif; }
.app *, .app *::before { box-sizing: border-box; }
button, input, select { margin: 0; padding: 0; border: 0; background: none; color: inherit; font: inherit; appearance: none; border-radius: 0; }
svg { display: block; }
h2, h3, p, ul { margin: 0; padding: 0; font: inherit; list-style: none; }
.ic { width: 18px; height: 18px; flex: none; overflow: visible; }
.grow { flex: 1; min-width: 0; }
.sw { flex: none; width: 11px; height: 11px; background: #ccffff; }

.titlebar { display: flex; flex: none; align-items: center; height: 28px; padding: 0 0 3px 5px; gap: 5px; background: #fff; color: #999; }
.titlebar .ic { width: 16px; height: 16px; }
.winbtns { display: flex; gap: 6px; }
.winbtns button { display: grid; place-items: center; width: 40px; height: 24px; }
.winbtns svg { width: 11px; height: 11px; fill: none; stroke: #888; }
.winbtns.dark { gap: 0; }
.winbtns.dark button { width: 46px; }
.winbtns.dark svg { stroke: #000; }
.winbtns.dark .off svg { stroke: #bbb; }
.menubar { display: flex; flex: none; align-items: center; height: 20px; }
.menubar button { padding: 0 8px; white-space: nowrap; }
.brand { width: 13px; }
.license { flex: 1; padding-right: 7px; text-align: right; white-space: nowrap; }
.menubar .mdi { padding: 0 2px; }
.mdi svg { width: 14px; height: 14px; }

.toolbar { display: flex; flex: none; align-items: center; height: 27px; border-top: 1px solid #e2e2e2; white-space: nowrap; }
.toolbar + .toolbar { height: 29px; }
.tb { display: grid; flex: none; place-items: center; width: 26px; height: 24px; }
.tb .ic { width: 17px; height: 17px; }
.tb.on { background: #cce4f7; border: 1px solid #90c8f6; }
.drop { flex: none; width: 12px; }
.drop svg { width: 9px; height: 9px; margin-left: 1px; }
.sep { flex: none; width: 7px; height: 19px; border-left: 1px solid #cfcfcf; }
.edge { flex: none; width: 11px; height: 27px; border-left: 1px solid #d8d8d8; background: radial-gradient(circle, #b5b5b5 1px, transparent 1px) 3px 4px / 4px 4px repeat-y; }
.edge.first { width: 6px; border: 0; background-position-x: 0; }
.more { flex: none; width: 13px; font-size: 12px; color: #333; }
.combo { position: relative; display: flex; align-items: center; height: 21px; padding-left: 5px; background: #e8e8f2; }
.combo select { flex: 1; min-width: 0; height: 21px; }
.combo .sw + select { padding-left: 5px; }
.chev { position: absolute; right: 3px; top: 4px; width: 12px; height: 12px; pointer-events: none; }
.case { flex: 1 0 271px; max-width: 271px; gap: 3px; }
.tag { width: 30px; height: 13px; background: #000; color: #fff; font-weight: 400; line-height: 13px; text-align: center; }
.lc { width: 28px; padding-left: 1px; border-right: 1px solid #fff; }
.case select { padding-left: 4px; }
.cs { flex: 0 0 126px; }
.step { display: grid; flex: none; place-items: center; width: 15px; height: 21px; background: #e8e8f2; }
.step.dim { width: 16px; background: #d0d0d0; border-right: 1px solid #f7f7f7; }
.step svg { width: 10px; height: 10px; }

.work { display: flex; flex: 1; min-height: 0; gap: 4px; }
.navigator { display: flex; flex: none; flex-direction: column; width: 269px; height: 1075px; }
.panelhead { display: flex; flex: none; align-items: center; height: 21px; padding-left: 3px; background: #d8e6f3; color: #3b4350; font-weight: 600; }
.panelhead button { width: 21px; }
.panelhead svg { width: 12px; height: 12px; margin: auto; }
.tree { flex: 1; padding-top: 2px; border-right: 2px solid #c8c8d6; border-top: 1px solid #c8c8d6; background: #fff; overflow: hidden; }
.tree li { display: flex; align-items: center; height: 18px; padding-left: 3px; }
.exp { width: 20px; }
.exp svg { width: 12px; height: 12px; }
.tic { width: 16px; height: 16px; margin-right: 5px; overflow: visible; }
.tree .l1 { padding-left: 4px; }
.tree .l1 .tic { margin-right: 4px; }
.tree .l2 { padding-left: 23px; }
.tree .l3 { padding-left: 43px; }
.tree .l4 { padding-left: 63px; }
.tree .l5 { width: 154px; margin-left: 100px; gap: 5px; white-space: nowrap; }
.tree .sel { background: #cce8ff; }
.bold .tx { font-weight: 600; }
.navtabs { display: flex; flex: none; height: 26px; border: 1px solid #c8c8d6; border-left: 0; }
.navtabs button { display: grid; place-items: center; width: 39px; height: 23px; border: 1px solid #c8c8d6; border-width: 0 1px 1px 0; background: #ededed; }
.navtabs .cur { height: 26px; background: #fff; margin-top: -1px; border-bottom: 0; }
.navtabs .ic { width: 16px; height: 16px; }

.main { display: flex; flex: 1; flex-direction: column; min-width: 0; gap: 4px; }
.view { position: relative; flex: 1; min-height: 0; background: #fff; overflow: hidden; }
.view > svg { position: absolute; inset: 0; width: 100%; height: 100%; }
.dashdot { fill: none; stroke: #555; stroke-width: 1; stroke-dasharray: 10 3 2 3; }
.marks text { font-size: 11px; text-anchor: middle; }
.caption { position: relative; padding: 5px; }
.nodes { display: flex; flex: none; flex-direction: column; }
.nodes .panelhead { padding-left: 6px; }
.submenu { height: 20px; border-bottom: 1px solid #dedede; padding-top: 3px; line-height: 16px; }
.submenu button { padding: 0 8px; }
.structure { margin: 3px 0 4px 2px; gap: 5px; }
.structure .ic { width: 15px; height: 15px; }
.tablewrap { display: flex; height: 107px; border-top: 1px solid #c8c8d6; border-bottom: 1px solid #c8c8d6; border-left: 1px solid #c8c8d6; }
table { flex: 1; width: 0; border-collapse: separate; border-spacing: 0; table-layout: fixed; background: #fff; }
th, td { height: 16px; padding: 0; border-right: 1px solid #dcdcdc; border-bottom: 1px solid #dcdcdc; font-weight: 400; line-height: 15px; white-space: nowrap; overflow: hidden; }
.thin th { height: 10px; background: #e0e0e0; border-color: #f2f2f2; }
.heads th { height: 32px; background: #ededed; vertical-align: bottom; line-height: 13px; padding-bottom: 2px; }
.heads .no, tbody .no { background: #e0e0e0; border-color: #f2f2f2; }
.cell { display: flex; align-items: center; gap: 5px; padding-left: 4px; }
.std { background: #ff5a00; }
.focus { outline: 1px dotted #000; outline-offset: -1px; }
.mid { text-align: center; }
.pad { padding-left: 5px; }
.num { padding-right: 4px; text-align: right; }
.supic { width: 12px; height: 12px; margin-left: 2px; }
.scroll { display: flex; flex-direction: column; align-items: center; width: 14px; padding-top: 3px; background: #ededed; }
.scroll svg { width: 11px; height: 13px; }
.scroll i { width: 13px; height: 18px; margin: 1px 0 auto; background: #c8c8c8; }
.sheets { display: flex; height: 26px; align-items: flex-start; }
.pager { display: flex; width: 125px; height: 23px; align-items: center; text-align: center; }
.pager button { width: 17px; }
.pager svg { width: 11px; height: 11px; margin: auto; }
.sheet { min-width: 61px; height: 22px; padding: 0 7px; border: 1px solid #c8c8d6; border-width: 0 1px 1px 0; background: #ededed; }
.sheet.cur { height: 24px; background: #fff; }
.status { display: flex; flex: none; height: 17px; padding-left: 734px; }
.status button { height: 20px; margin-right: 2px; padding: 0 3px; border: 1px solid #b4b4b4; border-right-color: #e0e0e0; background: #ededed; }
.status span { height: 18px; padding: 1px 4px; border-left: 1px solid #d4d4d4; white-space: nowrap; }
.c1 { width: 87px; } .c2 { width: 106px; } .c3 { width: 156px; } .c4 { width: 66px; } .c5 { width: 76px; } .c6 { width: 15px; }

.dialog { position: absolute; left: 426px; right: 48px; top: 399px; border: 1px solid #6a6a6a; background: #fff; }
.dtitle { display: flex; align-items: center; height: 30px; padding: 0 0 1px 8px; gap: 5px; }
.dtitle .ic { width: 16px; height: 16px; }
.dbody { display: flex; gap: 10px; padding: 9px 9px 8px; background: #d2d1d6; }
.card { padding: 0 5px; background: #fff; }
.card h3 { height: 22px; line-height: 18px; color: #566b98; font-weight: 600; }
.line { display: flex; align-items: center; gap: 5px; }
.bb { display: grid; flex: none; place-items: center; width: 25px; height: 21px; background: #cbe3f6; }
.bb .ic { width: 17px; height: 17px; }
.bb.gray { background: #e4e4e4; }
.listcard { display: flex; flex-direction: column; width: 200px; padding: 0 1px; }
.listcard h3 { height: 20px; padding-left: 5px; }
.list { display: flex; flex: 1; flex-direction: column; }
.lrow { display: flex; height: 18px; background: #f9f9f9; line-height: 18px; white-space: nowrap; }
.lrow.head, .lrow.rest { background: #fff; }
.lrow.rest { flex: 1; }
.lrow.sel { background: #c9e2f9; }
.a { display: flex; align-items: center; width: 22px; padding-left: 3px; border-right: 1px solid #e6e6e6; }
.sel .a { outline: 1px dotted #000; outline-offset: -1px; }
.b { width: 12px; padding-right: 2px; border-right: 1px solid #e6e6e6; text-align: right; }
.c { padding-left: 3px; }
.btns { display: flex; gap: 3px; padding: 5px 4px 4px; }
.gap { width: 4px; }
.right { flex: 1; min-width: 0; }
.toprow { display: flex; gap: 10px; height: 47px; }
.toprow .no { width: 60px; }
.toprow .name { flex: 0 0 387px; }
.toprow .act { flex: 1; }
.ro { width: 100%; height: 20px; padding: 0 3px; background: #e6e6e6; }
.no .ro { padding-right: 5px; text-align: right; }
.name .line { height: 20px; }
input[type=checkbox] { display: grid; flex: none; place-items: center; width: 13px; height: 13px; border: 1px solid #222; background: #fff; }
input[type=checkbox]:checked::before { content: ""; width: 9px; height: 5px; margin-top: -3px; border: solid #222; border-width: 0 0 1px 1px; rotate: -45deg; }
.act input[type=checkbox] { margin-top: 6px; }
.tabs { height: 32px; padding-top: 10px; }
.tabs button { width: 63px; height: 22px; padding-top: 3px; background: #ebebeb; }
.page { display: flex; gap: 10px; padding: 9px 9px 8px; background: #ebebeb; }
.left { display: flex; flex: 0 0 448px; flex-wrap: wrap; gap: 10px; }
.wp { width: 203px; min-height: 240px; }
.pa { width: 235px; min-height: 240px; }
.co { width: 329px; height: 47px; }
.em { width: 109px; height: 47px; }
.wp h3, .pa h3 { height: 27px; }
.field { display: flex; flex-direction: column; height: 56px; gap: 3px; }
.w135 { width: 135px; }
.w150 { width: 150px; }
.line .w135 + .bb + .bb { margin-left: -2px; }
.ax { width: 15px; }
.spin { display: flex; align-items: center; width: 90px; height: 20px; background: #e8e8f2; }
.spin input { width: 60px; text-align: right; }
.ud { width: 6px; height: 13px; margin-left: 9px; }
.pl { width: 10px; height: 10px; margin-left: 4px; }
.check { display: flex; align-items: center; gap: 6px; height: 20px; margin-bottom: 2px; }
.preview { display: flex; flex: 1; flex-direction: column; padding: 3px 5px 4px; }
.preview p { height: 27px; line-height: 13px; }
.scene { flex: 1; width: 410px; min-height: 0; overflow: visible; fill: none; }
.scene text { font: 14px "Liberation Sans", Arial, sans-serif; text-anchor: middle; }
.dfoot { display: flex; align-items: center; height: 42px; padding: 0 10px 0 9px; gap: 10px; }
.dfoot .line { gap: 3px; }
.colour { width: 21px; height: 21px; border: 1px solid #000; background: #ccffff; }
.push { width: 81px; height: 21px; border: 1px solid #adadad; background: #e1e1e1; }
.push.ok { border: 2px solid #0078d7; }
.push:disabled { background: #ccc; border-color: #bfbfbf; color: #838383; }
.pointer { position: absolute; left: 0; top: 0; pointer-events: none; fill: none; filter: drop-shadow(2px 3px 2px rgba(0, 0, 0, .45)); }
</style>
